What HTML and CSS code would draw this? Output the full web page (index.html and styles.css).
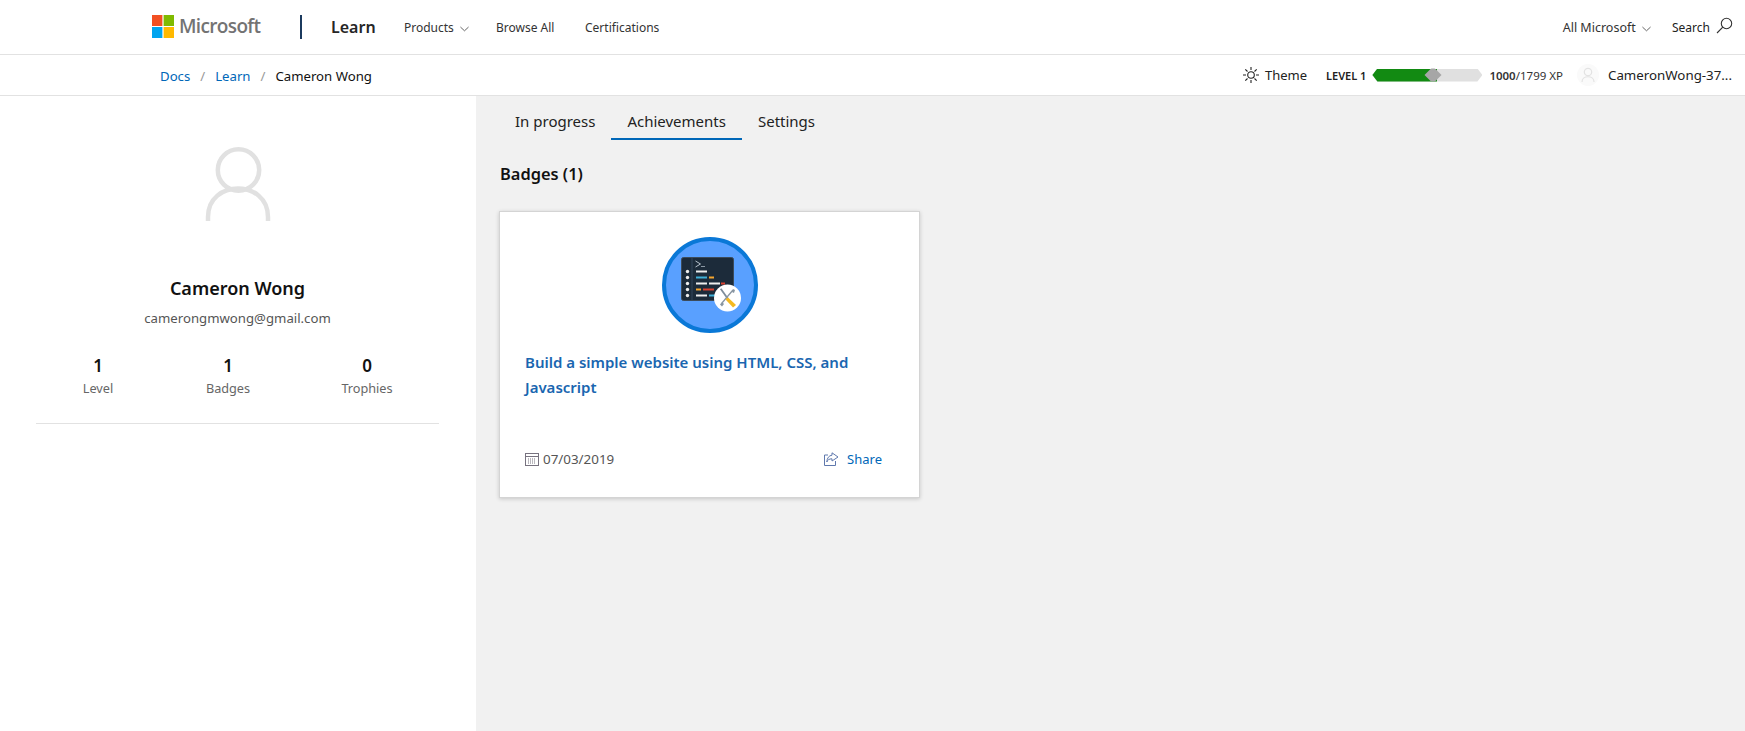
FILE: index.html
```html
<!DOCTYPE html>
<html lang="en">
<head>
<meta charset="utf-8">
<title>Cameron Wong - Learn</title>
<link rel="stylesheet" href="styles.css">
</head>
<body>
<header class="topbar">
  <div class="logo">
    <svg class="logo-mark" viewBox="0 0 22 23" width="22" height="23"><rect width="10.4" height="11" fill="#f25022"/><rect x="11.6" width="10.4" height="11" fill="#7fba00"/><rect y="12" width="10.4" height="11" fill="#00a4ef"/><rect x="11.6" y="12" width="10.4" height="11" fill="#ffb900"/></svg>
    <span class="logo-text">Microsoft</span>
  </div>
  <span class="divider"></span>
  <span class="brand">Learn</span>
  <nav class="nav">
    <a class="nav-products">Products <svg class="chev" viewBox="0 0 10 6" width="9" height="6"><path d="M.5.8 5 5 9.500.8" fill="none" stroke="#555" stroke-width="1"/></svg></a>
    <a class="nav-browse">Browse All</a>
    <a>Certifications</a>
  </nav>
  <div class="top-right">
    <a class="all-ms">All Microsoft <svg class="chev" viewBox="0 0 10 6" width="9" height="6"><path d="M.5.8 5 5 9.500.8" fill="none" stroke="#555" stroke-width="1"/></svg></a>
    <a class="search">Search <svg viewBox="0 0 17 17" width="17" height="17"><circle cx="10.500" cy="6.500" r="5.200" fill="none" stroke="#333" stroke-width="1.100"/><path d="M6.800 10.200 1 16" stroke="#333" stroke-width="1.100"/></svg></a>
  </div>
</header>
<div class="subbar">
  <nav class="crumbs"><a>Docs</a><span class="sep">/</span><a>Learn</a><span class="sep">/</span><span class="current">Cameron Wong</span></nav>
  <div class="status">
    <span class="theme"><svg viewBox="0 0 16 16" width="16" height="16" fill="none" stroke="#222" stroke-width="1.100"><circle cx="8" cy="8" r="3.300"/><path d="M8 0v3M8 13v3M0 8h3M13 8h3M2.300 2.300l2.200 2.200M11.500 11.500l2.200 2.200M2.300 13.700l2.200-2.200M11.500 4.500l2.200-2.200"/></svg>Theme</span>
    <span class="level">LEVEL 1</span>
    <span class="xpbar"><span class="xpfill" style="width:59%"></span><span class="xpknob"></span></span>
    <span class="xp"><b>1000</b>/1799 XP</span>
    <span class="mini-avatar"><svg viewBox="0 0 22 22" width="22" height="22"><circle cx="11" cy="11" r="11" fill="#fafafa"/><circle cx="11" cy="8" r="3.700" fill="none" stroke="#e3e3e3" stroke-width="1.200"/><path d="M5 18c0-7 12-7 12 0" fill="none" stroke="#e3e3e3" stroke-width="1.200"/></svg></span>
    <span class="username">CameronWong-37...</span>
  </div>
</div>
<div class="page">
  <aside class="sidebar">
    <svg class="avatar" viewBox="0 0 66 74" width="66" height="74"><circle cx="33.500" cy="23" r="20.700" fill="none" stroke="#e1e1e1" stroke-width="4.500"/><path d="M3 74V70C3 32 63 32 63 70V74" fill="none" stroke="#e1e1e1" stroke-width="4.500"/></svg>
    <h1 class="name">Cameron Wong</h1>
    <p class="email">camerongmwong@gmail.com</p>
    <div class="stats">
      <div class="stat stat-level"><strong>1</strong><span>Level</span></div>
      <div class="stat stat-badges"><strong>1</strong><span>Badges</span></div>
      <div class="stat stat-trophies"><strong>0</strong><span>Trophies</span></div>
    </div>
    <hr class="rule">
  </aside>
  <main class="main">
    <div class="tabs">
      <a class="tab">In progress</a>
      <a class="tab active">Achievements</a>
      <a class="tab">Settings</a>
    </div>
    <h2 class="heading">Badges (1)</h2>
    <article class="card">
      <svg class="badge" viewBox="0 0 96 96" width="96" height="96">
        <circle cx="48" cy="48" r="46" fill="#59a0ff" stroke="#0a78d7" stroke-width="4"/>
        <rect x="19.500" y="20.500" width="52" height="43" rx="2" fill="#1c2b3a" stroke="#3c4b5a" stroke-width="1"/>
        <path d="M30 21v42" stroke="#33475a"/>
        <path d="M33.500 24l5 3-5 3" fill="none" stroke="#b7c2cc" stroke-width="1"/>
        <rect x="39" y="29" width="4" height="1" fill="#8b98a4"/>
        <g class="code-lines">
          <g fill="#eee"><circle cx="24.500" cy="35" r="1.700"/><circle cx="24.500" cy="41" r="1.700"/><circle cx="24.500" cy="47" r="1.700"/><circle cx="24.500" cy="53" r="1.700"/><circle cx="24.500" cy="59" r="1.700"/><rect x="33" y="34" width="11" height="2"/><rect x="33" y="46" width="11" height="2"/><rect x="46" y="46" width="11" height="2"/><rect x="33" y="58" width="11" height="2"/></g>
          <rect x="33" y="40" width="11" height="2" fill="#3fb0d8"/><rect x="46" y="40" width="5" height="2" fill="#f4a52f"/><rect x="58" y="46" width="4" height="2" fill="#d8402f"/><rect x="33" y="52" width="5" height="2" fill="#f4a52f"/><rect x="40" y="52" width="11" height="2" fill="#d8402f"/><rect x="46" y="58" width="7" height="2" fill="#3fb0d8"/>
        </g>
        <circle cx="65.500" cy="61" r="13.500" fill="#fff"/>
        <path d="M58.700 51.700 66 62" stroke="#7d8c9a" stroke-width="1.800"/>
        <path d="M71 53 60 66" stroke="#8895a1" stroke-width="1.300"/>
        <path d="M71 52l2 1-1 3-2-1zM60 65l2 2-2 2.500-2-2z" fill="#8895a1"/>
        <path d="M66 60.500l8 7.500-3 2.500-7.500-8z" fill="#f5b91f"/>
      </svg>
      <a class="card-title">Build a simple website using HTML, CSS, and Javascript</a>
      <div class="card-foot">
        <span class="date"><svg viewBox="0 0 14 14" width="14" height="14" fill="none" stroke="#77727f"><rect x=".5" y="1.500" width="13" height="12"/><path d="M.5 4.500h13" /><path d="M3 7h8M3 9h8M3 11h8" stroke-dasharray="1 1"/></svg>07/03/2019</span>
        <a class="share"><svg viewBox="0 0 15 14" width="15" height="14" fill="none" stroke="#5f78ad"><path d="M8 .8 14 5 8 9V6.800C5 6.800 3.500 8 2.800 10 3 6 5 3.500 8 3.200z"/><path d="M4 3H.5v10.500h11V9"/></svg>Share</a>
      </div>
    </article>
  </main>
</div>
</body>
</html>
```
FILE: styles.css
```css
* { box-sizing: border-box; }
html, body { margin: 0; height: 100%; }
body { font-family: "Noto Sans", "Open Sans", sans-serif; color: #111; background: #f1f1f1; display: flex; flex-direction: column; height: 731px; overflow: hidden; }
a { color: inherit; text-decoration: none; }

.topbar { height: 55px; flex: none; background: #fff; border-bottom: 1px solid #e2e2e2; display: flex; align-items: center; padding-left: 152px; padding-right: 12px; font-size: 12px; color: #333; }
.logo { display: flex; align-items: center; width: 148px; margin-top: -2px; }
.logo-mark { flex: none; margin-right: 5px; }
.logo-text { font-family: "Open Sans", sans-serif; font-size: 19px; font-weight: 600; letter-spacing: -.65px; color: #737373; }
.divider { width: 2px; height: 24px; background: #1b3a5e; margin-right: 29px; margin-top: -1px; }
.brand { font-size: 16px; font-weight: 600; color: #262626; width: 73px; }
.nav { display: flex; }
.nav-products { width: 92px; }
.nav-browse { width: 89px; }
.chev { margin-left: 3px; }
.top-right { margin-left: auto; display: flex; align-items: center; }
.all-ms { margin-right: 21px; font-size: 12.500px; }
.search { display: flex; align-items: center; gap: 6px; color: #222; }
.search svg { margin-top: -4px; }

.subbar { height: 41px; flex: none; background: #fff; border-bottom: 1px solid #e2e2e2; display: flex; align-items: center; justify-content: space-between; padding-left: 160px; padding-right: 13px; }
.crumbs { font-size: 13.200px; color: #0067b8; display: flex; align-items: center; padding-top: 1px; }
.sep { color: #999; margin: 0 10px; }
.current { color: #111; }
.status { display: flex; align-items: center; font-size: 13px; color: #222; }
.theme { display: flex; align-items: center; gap: 6px; margin-right: 19px; }
.level { font-size: 11px; font-weight: 600; margin-right: 6px; }
.xpbar { position: relative; width: 110px; height: 13px; background: #e0e0e0; clip-path: polygon(5px 0, 105px 0, 100% 50%, 105px 100%, 5px 100%, 0 50%); margin-right: 7px; }
.xpfill { display: block; height: 100%; background: #128a12; }
.xpknob { position: absolute; left: 53px; top: -2px; width: 16px; height: 16px; background: #a6a6a6; transform: rotate(45deg) scale(.75); }
.xp { font-size: 11.500px; color: #333; margin-right: 14px; }
.xp b { font-weight: 600; }
.mini-avatar { display: flex; margin-right: 9px; }
.username { font-size: 13.300px; color: #222; }

.page { flex: 1; display: flex; min-height: 0; }
.sidebar { width: 476px; flex: none; background: #fff; display: flex; flex-direction: column; align-items: center; padding: 51px 37px 0 36px; }
.avatar { display: block; }
.name { font-size: 18px; font-weight: 600; margin: 55px 0 0; line-height: 24px; color: #111; }
.email { font-size: 13.200px; color: #555; margin: 8px 0 0; line-height: 20px; }
.stats { align-self: stretch; display: flex; margin-top: 26px; height: 50px; }
.stat { display: flex; flex-direction: column; align-items: center; }
.stat strong { font-size: 17px; font-weight: 600; line-height: 24px; color: #111; }
.stat span { font-size: 12.700px; color: #666; line-height: 20px; }
.stat-level { width: 124px; }
.stat-badges { width: 136px; }
.stat-trophies { width: 132px; margin-left: 5px; }
.rule { align-self: stretch; border: 0; border-top: 1px solid #e2e2e2; margin: 19px 0 0; }

.main { flex: 1; padding-left: 23px; }
.tabs { display: flex; height: 44px; }
.tab { font-size: 15px; color: #222; padding: 0 16px; height: 44px; line-height: 50px; }
.active { border-bottom: 2px solid #0067b8; }
.heading { font-size: 16.400px; font-weight: 600; margin: 22px 0 0 1px; line-height: 24px; color: #111; }
.card { width: 421px; height: 287px; margin-top: 25px; background: #fff; border: 1px solid #d4d4d4; box-shadow: 0 1px 4px rgba(0,0,0,.18); padding: 25px 24px 0 25px; display: flex; flex-direction: column; }
.badge { display: block; margin: 0 auto; flex: none; position: relative; left: -.5px; }
.code-lines { transform: translate(1px, -.5px); }
.card-title { font-size: 15px; font-weight: 600; color: #1a66b0; line-height: 25px; margin-top: 17px; height: 94px; }
.card-foot { display: flex; justify-content: space-between; align-items: center; padding-right: 13px; margin-top: 6px; font-size: 13.400px; }
.date { display: flex; align-items: center; gap: 4px; color: #555; }
.share { display: flex; align-items: center; gap: 8px; color: #0067b8; font-size: 13px; }
```
